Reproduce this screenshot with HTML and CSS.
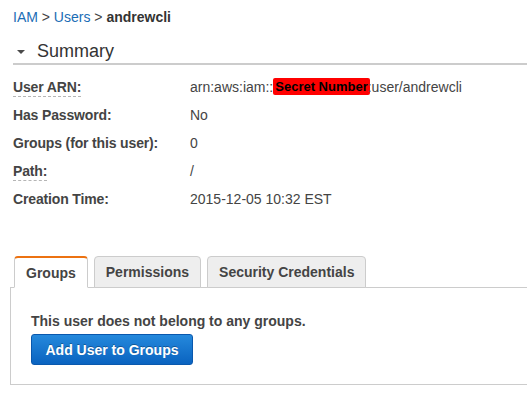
FILE: index.html
```html
<!DOCTYPE html>
<html>
<head>
<meta charset="utf-8">
<link rel="stylesheet" href="styles.css">
</head>
<body>
<div class="page">
  <nav class="crumbs">
    <a class="crumb-link" href="#">IAM</a> <span class="sep">&gt;</span> <a class="crumb-link" href="#">Users</a> <span class="sep">&gt;</span> <span class="crumb-current">andrewcli</span>
  </nav>

  <div class="summary-head">
    <span class="caret"></span>
    <span class="summary-title">Summary</span>
  </div>

  <div class="details">
    <div class="label"><span class="hint">User ARN:</span></div>
    <div class="value">arn:aws:iam::<span class="redact">Secret Number</span>:user/andrewcli</div>
    <div class="label">Has Password:</div>
    <div class="value">No</div>
    <div class="label">Groups (for this user):</div>
    <div class="value">0</div>
    <div class="label"><span class="hint">Path:</span></div>
    <div class="value">/</div>
    <div class="label">Creation Time:</div>
    <div class="value">2015-12-05 10:32 EST</div>
  </div>

  <div class="tabs">
    <div class="tab active">Groups</div>
    <div class="tab">Permissions</div>
    <div class="tab">Security Credentials</div>
  </div>
  <div class="panel">
    <div class="message">This user does not belong to any groups.</div>
    <button class="btn-primary">Add User to Groups</button>
  </div>
</div>
</body>
</html>
```

FILE: styles.css
```css
html, body {
  margin: 0;
  padding: 0;
  background: #ffffff;
  overflow: hidden;
}

body {
  font-family: "Liberation Sans", Arial, Helvetica, sans-serif;
  font-size: 14px;
  color: #444444;
  width: 527px;
  height: 410px;
}

.page {
  display: flex;
  flex-direction: column;
}

.crumbs {
  margin: 8px 0 0 13px;
  line-height: 18px;
  height: 18px;
  color: #444;
}

.crumb-link {
  color: #1a6db5;
  text-decoration: none;
}

.sep {
  color: #444;
}

.crumb-current {
  font-weight: bold;
  color: #333;
}

.summary-head {
  margin: 14px 0 0 13px;
  display: flex;
  align-items: center;
  height: 22px;
  padding-bottom: 1px;
  border-bottom: 2px solid #cccccc;
}

.caret {
  width: 0;
  height: 0;
  margin-left: 4px;
  margin-right: 12px;
  margin-top: 1px;
  border-left: 4px solid transparent;
  border-right: 4px solid transparent;
  border-top: 4px solid #4a4a4a;
}

.summary-title {
  font-size: 18px;
  line-height: 22px;
  color: #333;
}

.details {
  margin: 8px 0 0 13px;
  display: grid;
  grid-template-columns: 177px 1fr;
  grid-auto-rows: 28px;
  align-items: center;
}

.label {
  font-weight: bold;
  color: #444;
  line-height: 18px;
  letter-spacing: -0.15px;
}

.hint {
  border-bottom: 1px dashed #b5b5b5;
  padding-bottom: 1px;
}

.value {
  color: #444;
  line-height: 18px;
  white-space: nowrap;
}

.redact {
  display: inline-block;
  background: #ff0000;
  color: #000;
  font-weight: bold;
  font-size: 13px;
  line-height: 17px;
  padding: 0 2px;
  margin-right: -2px;
  border-radius: 2px;
  vertical-align: top;
}

.tabs {
  margin: 43px 0 0 14px;
  display: flex;
  gap: 6px;
  position: relative;
  z-index: 1;
  margin-bottom: -1px;
}

.tab {
  height: 32px;
  box-sizing: border-box;
  padding: 0 11px;
  display: flex;
  align-items: center;
  font-weight: bold;
  color: #444;
  background: #eeeeee;
  border: 1px solid #cccccc;
  border-radius: 4px 4px 0 0;
}

.tab.active {
  background: #ffffff;
  border-top: 2px solid #ec7211;
  border-bottom: 1px solid #ffffff;
}

.panel {
  margin-left: 10px;
  margin-right: -4px;
  border: 1px solid #cccccc;
  padding: 24px 20px 19px 20px;
  display: flex;
  flex-direction: column;
  align-items: flex-start;
}

.message {
  font-weight: bold;
  color: #444;
  line-height: 18px;
}

.btn-primary {
  margin-top: 4px;
  height: 31px;
  width: 162px;
  font-family: "Liberation Sans", Arial, Helvetica, sans-serif;
  font-size: 14px;
  font-weight: bold;
  color: #ffffff;
  text-shadow: 0 -1px 0 rgba(0, 0, 0, 0.3);
  background: linear-gradient(to bottom, #2589dc, #0a63c0);
  border: 1px solid #0a58ad;
  border-radius: 3px;
  padding: 0;
}
```
